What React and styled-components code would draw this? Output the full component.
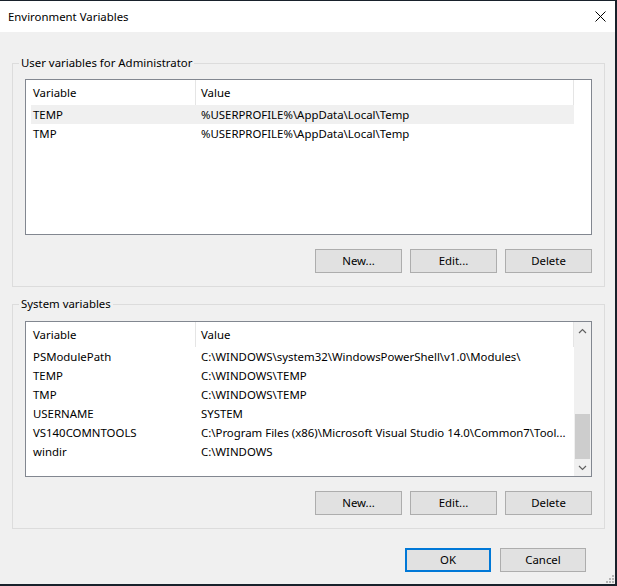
import React from "react";
import styled, { createGlobalStyle } from "styled-components";

const FS = "11.4px";

const Global = createGlobalStyle`
  html, body { margin: 0; padding: 0; }
  body {
    background: #18212b;
    font-family: "Segoe UI", "Noto Sans", "Liberation Sans", sans-serif;
    font-size: ${FS};
    color: #000;
  }
`;

const Window = styled.div`
  position: relative;
  width: 615px;
  height: 583px;
  margin-top: 1px;
  background: #f0f0f0;
  display: flex;
  flex-direction: column;
  box-sizing: border-box;
`;

const TitleBar = styled.div`
  height: 31px;
  flex: 0 0 31px;
  background: #fff;
  display: flex;
  align-items: center;
  justify-content: space-between;
  padding: 0 9px 0 8px;
`;

const Title = styled.span`
  font-size: ${FS};
  line-height: 16px;
`;

const Content = styled.div`
  flex: 1;
  display: flex;
  flex-direction: column;
  padding: 23px 10px 0 12px;
`;

const Group = styled.fieldset`
  margin: ${(p) => (p.$first ? "0" : "9px 0 0 0")};
  padding: 0 0 13px 0;
  border: 1px solid #dcdcdc;
  min-width: 0;
  display: flex;
  flex-direction: column;
`;

const Legend = styled.legend`
  margin-left: 6px;
  padding: 0 2px;
  font-size: ${FS};
  line-height: 16px;
`;

const ListBox = styled.div`
  margin: ${(p) => p.$top}px 12px 0 12px;
  height: 156px;
  box-sizing: border-box;
  border: 1px solid #828790;
  background: #fff;
  display: flex;
  overflow: hidden;
`;

const ListMain = styled.div`
  flex: 0 0 548px;
  padding-left: 5px;
  box-sizing: border-box;
  display: flex;
  flex-direction: column;
`;

const HeaderRow = styled.div`
  display: grid;
  grid-template-columns: 165px 1fr;
  height: 25px;
  flex: 0 0 25px;
`;

const HeaderCell = styled.div`
  border-right: 1px solid #e5e5e5;
  display: flex;
  align-items: center;
  padding-left: ${(p) => p.$pad}px;
  line-height: 16px;
`;

const Row = styled.div`
  display: grid;
  grid-template-columns: 165px 1fr;
  height: 19px;
  flex: 0 0 19px;
  background: ${(p) => (p.$selected ? "#f0f0f0" : "transparent")};
`;

const Cell = styled.div`
  display: flex;
  align-items: center;
  padding-left: ${(p) => p.$pad}px;
  padding-right: 2px;
  white-space: nowrap;
  overflow: hidden;
  line-height: 16px;
`;

const ScrollBar = styled.div`
  flex: 0 0 17px;
  background: #f0f0f0;
  display: flex;
  flex-direction: column;
`;

const ScrollArrow = styled.div`
  height: 17px;
  flex: 0 0 17px;
  display: flex;
  align-items: center;
  justify-content: center;
`;

const ScrollTrack = styled.div`
  flex: 1;
  display: flex;
  flex-direction: column;
  justify-content: flex-end;
`;

const Thumb = styled.div`
  height: 45px;
  margin: 0 1px;
  background: #cdcdcd;
`;

const ButtonRow = styled.div`
  display: flex;
  justify-content: flex-end;
  gap: ${(p) => p.$gap}px;
  margin: ${(p) => p.$margin};
`;

const Button = styled.button`
  width: ${(p) => p.$w}px;
  height: ${(p) => p.$h}px;
  box-sizing: border-box;
  background: #e1e1e1;
  border: ${(p) => (p.$primary ? "2px solid #0078d7" : "1px solid #adadad")};
  font-family: inherit;
  font-size: ${FS};
  color: #000;
  padding: 0;
  border-radius: 0;
  line-height: 16px;
`;

const Grip = styled.svg`
  position: absolute;
  right: 1px;
  bottom: 1px;
`;

const userVars = [
  ["TEMP", "%USERPROFILE%\\AppData\\Local\\Temp", true],
  ["TMP", "%USERPROFILE%\\AppData\\Local\\Temp"],
];

const sysVars = [
  ["PSModulePath", "C:\\WINDOWS\\system32\\WindowsPowerShell\\v1.0\\Modules\\"],
  ["TEMP", "C:\\WINDOWS\\TEMP"],
  ["TMP", "C:\\WINDOWS\\TEMP"],
  ["USERNAME", "SYSTEM"],
  ["VS140COMNTOOLS", "C:\\Program Files (x86)\\Microsoft Visual Studio 14.0\\Common7\\Tool..."],
  ["windir", "C:\\WINDOWS"],
];

function VarList({ rows, top, scroll }) {
  return (
    <ListBox $top={top}>
      <ListMain>
        <HeaderRow>
          <HeaderCell $pad={2}>Variable</HeaderCell>
          <HeaderCell $pad={5}>Value</HeaderCell>
        </HeaderRow>
        {rows.map(([k, v, sel], i) => (
          <Row key={i} $selected={sel}>
            <Cell $pad={2}>{k}</Cell>
            <Cell $pad={5}>{v}</Cell>
          </Row>
        ))}
      </ListMain>
      {scroll && (
        <ScrollBar>
          <ScrollArrow>
            <svg width="9" height="6" viewBox="0 0 9 6">
              <polyline points="1,5 4.5,1.5 8,5" fill="none" stroke="#606060" strokeWidth="1.2" />
            </svg>
          </ScrollArrow>
          <ScrollTrack>
            <Thumb />
          </ScrollTrack>
          <ScrollArrow>
            <svg width="9" height="6" viewBox="0 0 9 6">
              <polyline points="1,1 4.5,4.5 8,1" fill="none" stroke="#606060" strokeWidth="1.2" />
            </svg>
          </ScrollArrow>
        </ScrollBar>
      )}
    </ListBox>
  );
}

function ActionButtons() {
  return (
    <ButtonRow $gap={8} $margin="14px 12px 0 0">
      <Button $w={87} $h={24}>New...</Button>
      <Button $w={87} $h={24}>Edit...</Button>
      <Button $w={87} $h={24}>Delete</Button>
    </ButtonRow>
  );
}

export default function App() {
  return (
    <>
      <Global />
      <Window>
        <TitleBar>
          <Title>Environment Variables</Title>
          <svg width="11" height="11" viewBox="0 0 11 11">
            <path d="M0.5 0.5 L10.5 10.5 M10.5 0.5 L0.5 10.5" stroke="#000" strokeWidth="1" />
          </svg>
        </TitleBar>
        <Content>
          <Group $first>
            <Legend>User variables for Administrator</Legend>
            <VarList rows={userVars} top={8} />
            <ActionButtons />
          </Group>
          <Group>
            <Legend>System variables</Legend>
            <VarList rows={sysVars} top={9} scroll />
            <ActionButtons />
          </Group>
          <ButtonRow $gap={9} $margin="19px 19px 0 0">
            <Button $w={86} $h={24} $primary>OK</Button>
            <Button $w={86} $h={24}>Cancel</Button>
          </ButtonRow>
        </Content>
        <Grip width="9" height="9" viewBox="0 0 9 9">
          <rect x="7" y="1" width="2" height="2" fill="#b4b4b4" />
          <rect x="4" y="4" width="2" height="2" fill="#b4b4b4" />
          <rect x="7" y="4" width="2" height="2" fill="#b4b4b4" />
          <rect x="1" y="7" width="2" height="2" fill="#b4b4b4" />
          <rect x="4" y="7" width="2" height="2" fill="#b4b4b4" />
          <rect x="7" y="7" width="2" height="2" fill="#b4b4b4" />
        </Grip>
      </Window>
    </>
  );
}
